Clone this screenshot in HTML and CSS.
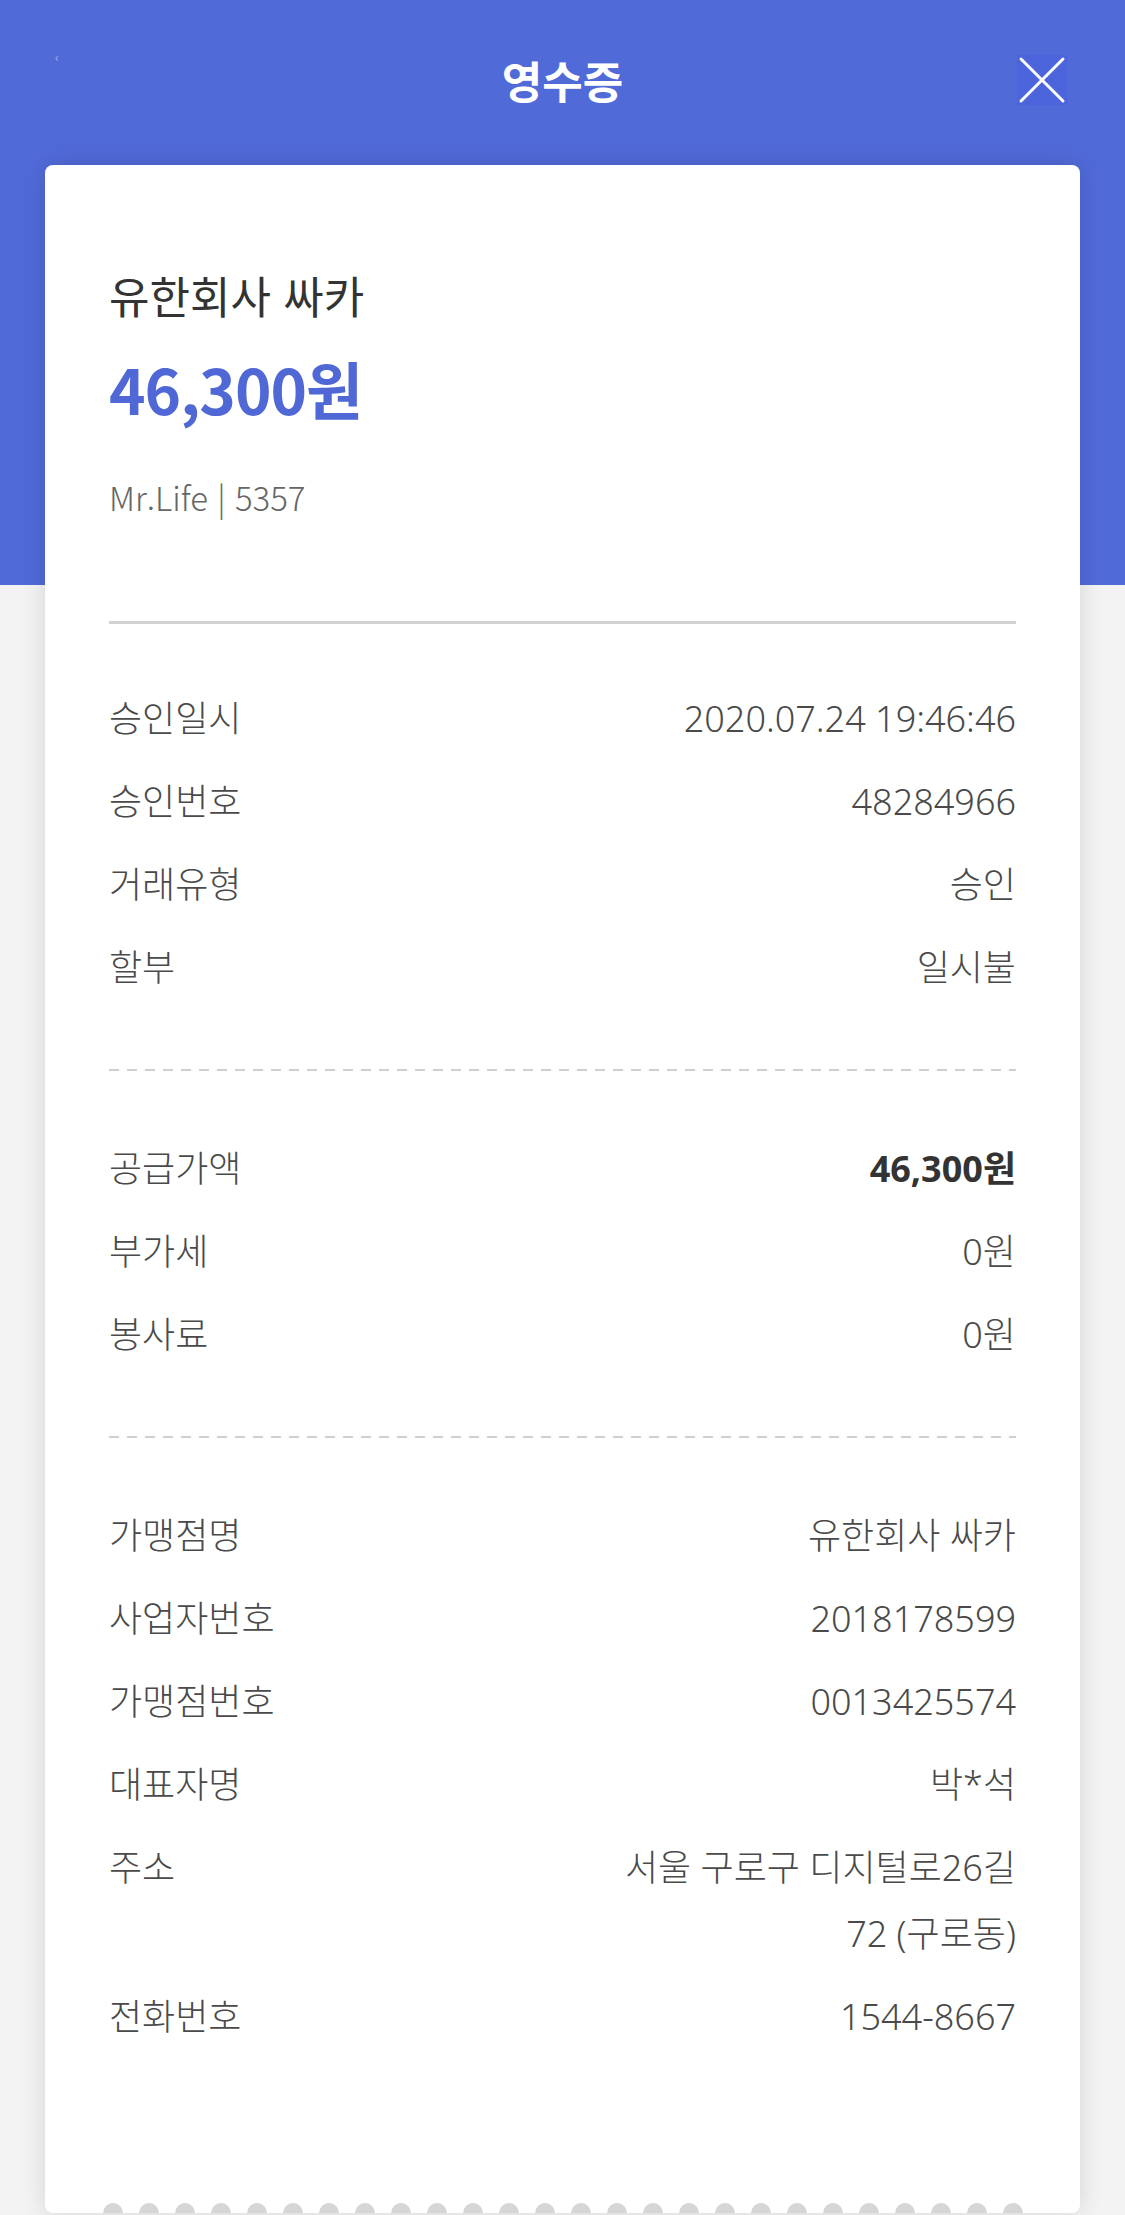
FILE: index.html
```html
<!DOCTYPE html>
<html lang="ko">
  <head>
    <meta charset="UTF-8" />
    <meta name="viewport" content="width=device-width, initial-scale=1.0" />
    <title>영수증</title>
    <link rel="stylesheet" href="styles.css">
  </head>
  <body>
    <header class="topbar">
      <span class="back">‹</span>
      <h1>영수증</h1>
      <button class="close" aria-label="닫기">
        <svg viewBox="0 0 50 50" width="50" height="50">
          <path d="M4 4 L46 46 M46 4 L4 46" stroke="#fff" stroke-width="3" stroke-linecap="round" fill="none" />
        </svg>
      </button>
    </header>

    <section class="receipt">
      <div class="summary">
        <p class="store">유한회사 싸카</p>
        <p class="amount">46,300원</p>
        <p class="card-info">Mr.Life | 5357</p>
      </div>

      <ul class="rows first">
        <li><span class="label">승인일시</span><span class="value">2020.07.24 19:46:46</span></li>
        <li><span class="label">승인번호</span><span class="value">48284966</span></li>
        <li><span class="label">거래유형</span><span class="value">승인</span></li>
        <li><span class="label">할부</span><span class="value">일시불</span></li>
      </ul>

      <div class="dashed"></div>

      <ul class="rows">
        <li><span class="label">공급가액</span><span class="value strong">46,300원</span></li>
        <li><span class="label">부가세</span><span class="value">0원</span></li>
        <li><span class="label">봉사료</span><span class="value">0원</span></li>
      </ul>

      <div class="dashed"></div>

      <ul class="rows">
        <li><span class="label">가맹점명</span><span class="value">유한회사 싸카</span></li>
        <li><span class="label">사업자번호</span><span class="value">2018178599</span></li>
        <li><span class="label">가맹점번호</span><span class="value">0013425574</span></li>
        <li><span class="label">대표자명</span><span class="value">박*석</span></li>
        <li><span class="label">주소</span><span class="value">서울 구로구 디지털로26길 72 (구로동)</span></li>
        <li><span class="label">전화번호</span><span class="value">1544-8667</span></li>
      </ul>

      <div class="teeth">
        <span></span><span></span><span></span><span></span><span></span><span></span>
        <span></span><span></span><span></span><span></span><span></span><span></span>
        <span></span><span></span><span></span><span></span><span></span><span></span>
        <span></span><span></span><span></span><span></span><span></span><span></span>
        <span></span><span></span>
      </div>
    </section>
  </body>
</html>
```

FILE: styles.css
```css
body {
  font-family: "Noto Sans CJK KR", "Noto Sans", sans-serif;
  margin: 0;
  background-color: #f3f3f3;
  background-image: linear-gradient(to bottom, #506ad8 0, #506ad8 585px, #f3f3f3 585px);
  background-repeat: no-repeat;
  min-height: 2215px;
}

.topbar {
  display: grid;
  grid-template-columns: 1fr auto 1fr;
  align-items: center;
  height: 160px;
}

.back {
  justify-self: start;
  align-self: start;
  margin: 48px 0 0 55px;
  font-size: 12px;
  color: rgba(255, 255, 255, 0.5);
}

.topbar h1 {
  margin: 0;
  font-size: 44px;
  font-weight: bold;
  color: #fff;
  line-height: 60px;
}

.close {
  justify-self: end;
  margin-right: 58px;
  width: 50px;
  height: 50px;
  padding: 0;
  border: none;
  background-color: #4c65dc;
  display: flex;
}

.receipt {
  margin: 5px 45px 0;
  padding: 100px 64px 0;
  background-color: #fff;
  border-radius: 8px;
  box-shadow: 0 0 24px rgba(0, 0, 0, 0.13);
}

.summary p {
  margin: 0;
}

.store {
  font-size: 44px;
  line-height: 60px;
  color: #333;
}

.amount {
  margin-top: 23px !important;
  font-size: 62px;
  line-height: 80px;
  font-weight: bold;
  color: #4f68d6;
  letter-spacing: -1px;
}

.card-info {
  margin-top: 44px !important;
  font-size: 33px;
  line-height: 50px;
  color: #666;
  font-weight: 300;
}

.rows {
  list-style: none;
  margin: 0;
  padding: 65px 0 68px;
  display: flex;
  flex-direction: column;
  gap: 17px;
}

.rows.first {
  margin-top: 99px;
  border-top: 3px solid #d2d2d2;
  padding-top: 62px;
}

.rows li {
  display: flex;
  justify-content: space-between;
  align-items: flex-start;
  font-family: "Noto Sans", "Noto Sans CJK KR", sans-serif;
  font-size: 36px;
  line-height: 66px;
  color: #4a4a4a;
  font-weight: 300;
}

.value {
  max-width: 420px;
  text-align: right;
}

.value.strong {
  font-weight: bold;
  color: #333;
}

.dashed {
  height: 2px;
  background-image: repeating-linear-gradient(to right, #cfcfcf 0, #cfcfcf 10px, transparent 10px, transparent 18px);
}

.rows:last-of-type {
  padding-bottom: 153px;
}

.teeth {
  display: flex;
  justify-content: center;
  gap: 16px;
  margin: 0 -64px;
  height: 10px;
  align-items: flex-end;
}

.teeth span {
  width: 20px;
  height: 10px;
  border-radius: 10px 10px 0 0;
  background-color: #d6d6d6;
}
```
